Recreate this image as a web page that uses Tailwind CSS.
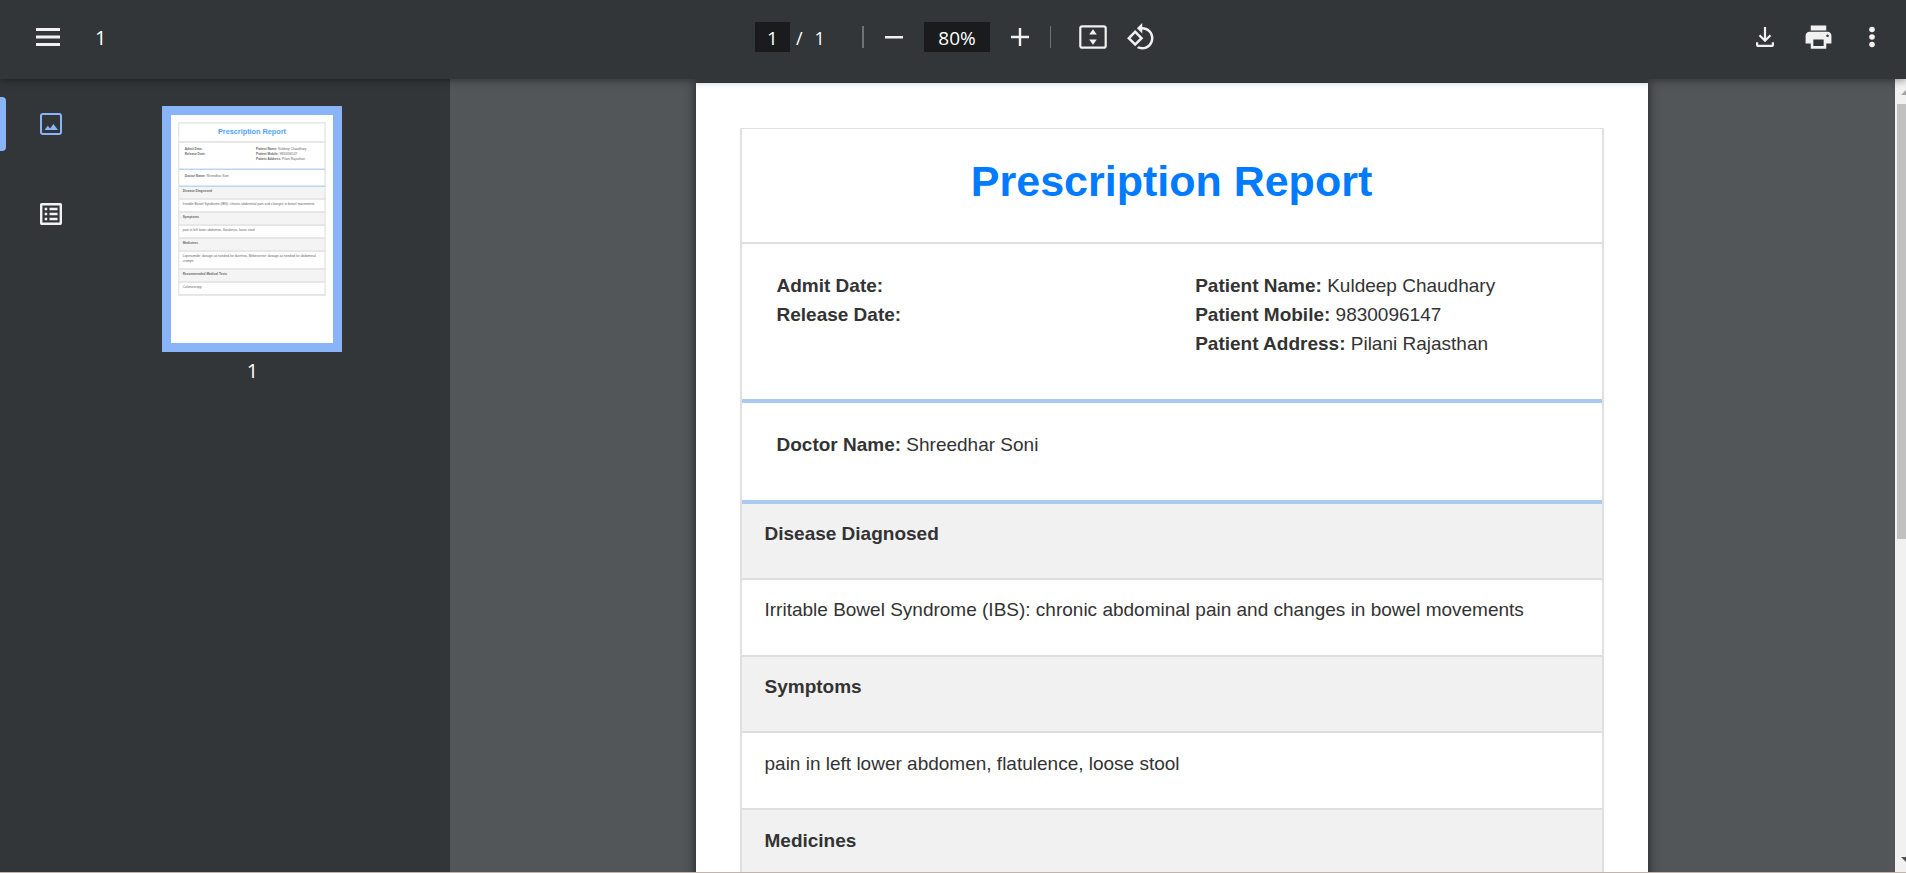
<!DOCTYPE html>
<html lang="en">
<head>
<meta charset="utf-8">
<title>Prescription Report</title>
<script src="https://cdn.jsdelivr.net/npm/@tailwindcss/browser@4"></script>
</head>
<body class="flex h-screen flex-col overflow-hidden border-b border-[#c0b4ae] bg-[#525659] font-['Open_Sans',sans-serif] text-[19px] text-white">
  <header class="relative z-10 flex h-[79px] shrink-0 items-center bg-[#323639] pb-[5px] shadow-[0_1px_8px_rgba(0,0,0,0.45)]">
    <div class="flex flex-1 items-center gap-[35px] pl-9">
      <button aria-label="Menu" class="text-[#f1f1f1]">
        <svg class="block" width="24" height="18" fill="currentColor"><path d="M0 0h24v3H0zM0 7.500h24v3H0zM0 15h24v3H0z"/></svg>
      </button>
      <h1 class="pt-[2px] text-[20px] font-medium">1</h1>
    </div>
    <div class="flex items-center text-[#f1f1f1]">
      <input aria-label="Page number" value="1" class="h-[30px] w-[35px] bg-[#191b1c] pt-[2px] text-center text-white">
      <span class="flex w-[72px] gap-[12px] pt-[2px] pl-[6px] text-[18px] text-white"><span>/</span><span>1</span></span>
      <span class="mr-[21px] h-[22px] w-[2px] bg-[#707376]"></span>
      <button aria-label="Zoom out"><svg class="block" width="18" height="18" fill="currentColor"><path d="M0 8h18v2.500H0z"/></svg></button>
      <input aria-label="Zoom level" value="80%" class="mx-[21px] h-[30px] w-[66px] bg-[#191b1c] pt-[2px] text-center text-white">
      <button aria-label="Zoom in"><svg class="block" width="18" height="18" fill="currentColor"><path d="M0 7.800h7.800V0h2.400v7.800H18v2.400h-7.800V18H7.800v-7.800H0z"/></svg></button>
      <span class="mr-[28px] ml-[21px] h-[22px] w-px bg-[#707376]"></span>
      <button aria-label="Fit to page" class="mr-[19px]"><svg class="block" width="28" height="24"><rect x="1.300" y="1.300" width="25.400" height="21.400" rx="2" fill="none" stroke="currentColor" stroke-width="2.200"/><path fill="currentColor" d="M14 4.200l3.800 5.200h-7.600zM14 19.800l3.800-5.200h-7.600z"/></svg></button>
      <button aria-label="Rotate counterclockwise"><svg class="block" width="30" height="30" viewBox="0 0 24 24" fill="currentColor"><path d="M7.340 6.410L.86 12.900l6.490 6.480 6.490-6.480-6.500-6.490zM3.690 12.900l3.660-3.660L11 12.900l-3.660 3.660-3.650-3.660zm15.670-6.260C17.610 4.880 15.300 4 13 4V.76L8.760 5 13 9.240V6c1.790 0 3.580.68 4.950 2.050 2.730 2.730 2.730 7.170 0 9.900C16.580 19.320 14.790 20 13 20c-.97 0-1.940-.21-2.840-.61l-1.490 1.490C10.020 21.620 11.510 22 13 22c2.300 0 4.610-.88 6.360-2.640 3.520-3.510 3.520-9.210 0-12.720z"/></svg></button>
    </div>
    <div class="flex flex-1 items-center justify-end pr-[31px] text-[#f1f1f1]">
      <button aria-label="Download" class="mr-[29px]"><svg class="block" width="18" height="20" fill="none" stroke="currentColor" stroke-width="2.200"><path d="M9 0v14M3.500 8.300L9 13.800l5.500-5.500M1.100 15.300v2.100q0 1.500 1.500 1.500h12.800q1.500 0 1.500-1.500v-2.100"/></svg></button>
      <button aria-label="Print" class="mr-[35px]"><svg class="block" width="31" height="32" viewBox="0 0 24 24" fill="currentColor"><path d="M19 8H5c-1.660 0-3 1.340-3 3v6h4v4h12v-4h4v-6c0-1.660-1.340-3-3-3zm-3 11H8v-5h8v5zm3-7c-.55 0-1-.45-1-1s.45-1 1-1 1 .45 1 1-.45 1-1 1zm-1-9H6v4h12V3z"/></svg></button>
      <button aria-label="More actions"><svg class="block" width="6" height="22" fill="currentColor"><circle cx="3" cy="3.500" r="2.800"/><circle cx="3" cy="11" r="2.800"/><circle cx="3" cy="18.500" r="2.800"/></svg></button>
    </div>
  </header>

  <div class="flex min-h-0 flex-1">
    <aside class="flex w-[450px] shrink-0 bg-[#323639]">
      <nav class="flex w-[102px] flex-col gap-[36px] pt-[18px]">
        <button aria-label="Thumbnails" class="flex h-[54px] items-center text-[#8ab4f8]">
          <span class="mr-[34px] h-full w-[6px] rounded-r-[4px] bg-[#8ab4f8]"></span>
          <svg width="22" height="22"><rect x="1" y="1" width="20" height="20" rx="2" fill="none" stroke="currentColor" stroke-width="2"/><path fill="currentColor" d="M4.500 17l3.300-4.300 2.300 2.700 3.300-4.400 4.600 6z"/></svg>
        </button>
        <button aria-label="Document outline" class="flex h-[54px] items-center pl-[40px] text-[#f1f1f1]">
          <svg width="22" height="22"><rect x="1.200" y="1.200" width="19.600" height="19.600" rx="0.500" fill="none" stroke="currentColor" stroke-width="2.400"/><path fill="currentColor" d="M4.700 4.800h2.500v2.500H4.700zM9.500 4.800h8v2.500h-8zM4.700 9.800h2.500v2.500H4.700zM9.500 9.800h8v2.500h-8zM4.700 14.800h2.500v2.500H4.700zM9.500 14.800h8v2.500h-8z"/></svg>
        </button>
      </nav>
      <div class="flex flex-col items-center pt-[27px] pl-[60px]">
        <button aria-label="Page 1" class="border-[9px] border-[#8ab4f8] bg-white">
          <svg class="block font-['Liberation_Sans',Arial,sans-serif]" width="162" height="228" viewBox="0 0 1620 2280" font-size="32" fill="#666">
            <g fill="#f4f4f4"><path d="M75 715h1470v120H75zM75 980h1470v110H75zM75 1240h1470v110H75zM75 1550h1470v110H75z"/></g>
            <path fill="none" stroke="#e7e7e7" stroke-width="14" d="M77 77h1464v1725H77z"/>
            <path stroke="#e7e7e7" stroke-width="20" d="M70 270h1478M70 840h1478M70 970h1478M70 1100h1478M70 1230h1478M70 1360h1478M70 1540h1478M70 1670h1478M70 1800h1478"/>
            <path stroke="#bdd5ef" stroke-width="14" d="M80 542h1460M80 712h1460"/>
            <text x="810" y="187" text-anchor="middle" font-size="73" font-weight="bold" fill="#4da3ff">Prescription Report</text>
            <g font-weight="bold">
              <text x="137" y="350">Admit Date:</text><text x="137" y="400">Release Date:</text>
              <text x="850" y="350">Patient Name: <tspan font-weight="normal">Kuldeep Chaudhary</tspan></text>
              <text x="850" y="400">Patient Mobile: <tspan font-weight="normal">9830096147</tspan></text>
              <text x="850" y="450">Patient Address: <tspan font-weight="normal">Pilani Rajasthan</tspan></text>
              <text x="137" y="620">Doctor Name: <tspan font-weight="normal">Shreedhar Soni</tspan></text>
              <text x="117" y="770">Disease Diagnosed</text>
              <text x="117" y="1030">Symptoms</text>
              <text x="117" y="1290">Medicines</text>
              <text x="117" y="1600">Recommended Medical Tests</text>
            </g>
            <g font-size="33">
              <text x="117" y="900">Irritable Bowel Syndrome (IBS): chronic abdominal pain and changes in bowel movements</text>
              <text x="117" y="1160">pain in left lower abdomen, flatulence, loose stool</text>
              <text x="117" y="1420">Loperamide: dosage as needed for diarrhea, Mebeverine: dosage as needed for abdominal</text>
              <text x="117" y="1470">cramps</text>
              <text x="117" y="1730">Colonoscopy</text>
            </g>
          </svg>
        </button>
        <span class="mt-[5px] pl-px text-[20px] leading-[28px]">1</span>
      </div>
    </aside>

    <main class="min-w-0 flex-1 overflow-hidden pt-[4px] pr-[2px]">
      <article class="mx-auto min-h-[1340px] w-[952px] bg-white px-[44px] pt-[45px] font-['Liberation_Sans',Arial,sans-serif] leading-[29px] text-[#333] shadow-[0_0_8px_2px_rgba(35,37,40,0.8)]">
        <table class="w-full border-separate border-spacing-0 border-2 border-t border-b-0 border-[#e0e0e0] text-left">
          <tbody>
            <tr><td class="border-b-2 border-[#dedede] pt-[20px] pb-[28px]">
              <h2 class="text-center text-[43px] leading-[65px] font-bold text-[#007bff]">Prescription Report</h2>
            </td></tr>
            <tr><td class="border-b-4 border-[#a9cbf0] px-[35px] pt-[27px] pb-[41px]">
              <div class="grid grid-cols-[53%_1fr]">
                <div><p><b>Admit Date:</b></p><p><b>Release Date:</b></p></div>
                <div>
                  <p><b>Patient Name:</b> Kuldeep Chaudhary</p>
                  <p><b>Patient Mobile:</b> 9830096147</p>
                  <p><b>Patient Address:</b> Pilani Rajasthan</p>
                </div>
              </div>
            </td></tr>
            <tr><td class="border-b-4 border-[#a9cbf0] px-[35px] pt-[27px] pb-[41px]"><b>Doctor Name:</b> Shreedhar Soni</td></tr>
            <tr><th class="border-b-2 border-[#dedede] bg-[#f1f1f1] px-[23px] pt-[15px] pb-[30px]">Disease Diagnosed</th></tr>
            <tr><td class="border-b-2 border-[#dedede] px-[23px] pt-[15px] pb-[31px]">Irritable Bowel Syndrome (IBS): chronic abdominal pain and changes in bowel movements</td></tr>
            <tr><th class="border-b-2 border-[#dedede] bg-[#f1f1f1] px-[23px] pt-[15px] pb-[30px]">Symptoms</th></tr>
            <tr><td class="border-b-2 border-[#dedede] px-[23px] pt-[16px] pb-[30px]">pain in left lower abdomen, flatulence, loose stool</td></tr>
            <tr><th class="border-b-2 border-[#dedede] bg-[#f1f1f1] px-[23px] pt-[16px] pb-[30px]">Medicines</th></tr>
          </tbody>
        </table>
      </article>
    </main>

    <!-- Scrollbar, partly past the window edge -->
    <div aria-hidden="true" class="flex w-[11px] shrink-0 flex-col overflow-hidden bg-[#f1f1f1] pt-[11px] pb-[10px] pl-[2px]">
      <svg class="ml-[4px] shrink-0" width="5" height="5"><path fill="#a3a3a3" d="M0 5l5-5v5z"/></svg>
      <span class="mt-[9px] h-[435px] w-full bg-[#c1c1c1]"></span>
      <svg class="mt-auto ml-[4px] shrink-0" width="5" height="5"><path fill="#505050" d="M0 0h5v5z"/></svg>
    </div>
  </div>
</body>
</html>
